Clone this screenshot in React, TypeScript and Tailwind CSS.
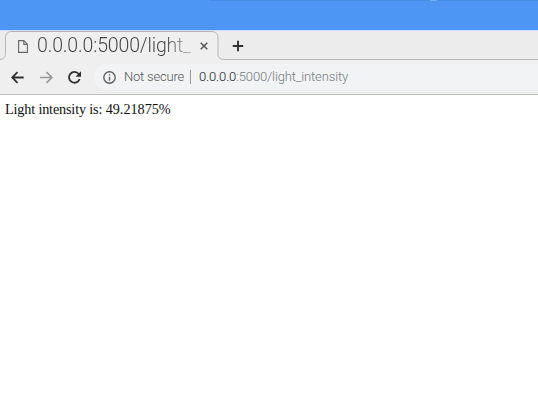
function TabStrip() {
  return (
    <div className="relative h-[31px] bg-[#ececec]">
      <svg className="absolute inset-0" width="538" height="31" viewBox="0 0 538 31" fill="none">
        <path d="M0 0H538" stroke="#c9dff9" strokeWidth="2" />
        <path d="M0 29.500C4 29 5.500 27 5.500 23V8C5.500 3.500 8 1.500 12 1.500H211C216 1.500 218 4 218 8V24C218 28 220.500 29.500 225 29.500H538V31H0Z" fill="#efefef" />
        <path d="M0 29.500C4 29 5.500 27 5.500 23V8C5.500 3.500 8 1.500 12 1.500H211C216 1.500 218 4 218 8V24C218 28 220.500 29.500 225 29.500H538" stroke="#b5b5b5" />
      </svg>
      <div className="relative flex h-full items-center">
        <svg className="ml-[18px] mt-px shrink-0" width="10" height="13" viewBox="0 0 10 13" fill="none" stroke="#666" strokeWidth="1.1">
          <path d="M.6.6H5.800L9.400 4.200V12.400H.6ZM5.800.6V4.400H9.400" />
        </svg>
        <div className="ml-[9px] w-[154px] whitespace-nowrap bg-linear-to-r from-[#444] from-82% to-[#66666660] bg-clip-text text-[19.5px] leading-[29px] font-light tracking-[-0.150px] text-transparent">
          0.0.0.0:5000/light_
        </div>
        <svg className="ml-[9px] shrink-0" width="8" height="8" viewBox="0 0 8 8" stroke="#555" strokeWidth="1.5">
          <path d="M.7.7L7.300 7.300M7.300.7L.7 7.300" />
        </svg>
        <svg className="ml-[24px] shrink-0" width="12" height="12" viewBox="0 0 12 12" stroke="#303030" strokeWidth="1.9">
          <path d="M6 .8V11.200M.8 6H11.200" />
        </svg>
      </div>
    </div>
  );
}

function Toolbar() {
  return (
    <div className="flex h-[34px] items-center border-b border-[#bfc1bd] bg-[#efefef] pb-px">
      <svg className="ml-[11px] shrink-0" width="13" height="13" viewBox="0 0 13 13" fill="none" stroke="#303030" strokeWidth="1.8">
        <path d="M12.700 6.500H1.500M6.500 1.200L1.200 6.500L6.500 11.800" />
      </svg>
      <svg className="ml-4 shrink-0" width="13" height="13" viewBox="0 0 13 13" fill="none" stroke="#999" strokeWidth="1.7">
        <path d="M0 6.500H11.500M6.500 1.200L11.800 6.500L6.500 11.800" />
      </svg>
      <svg className="ml-[15px] shrink-0" width="13" height="13" viewBox="0 0 13 13" fill="none">
        <path d="M10.700 3A5.400 5.400 0 1 0 11.600 8" stroke="#303030" strokeWidth="1.800" />
        <path d="M13 .2V5.700H7.500Z" fill="#303030" />
      </svg>
      <div className="ml-[13px] flex h-[26px] flex-1 items-center rounded-l-full bg-[#f2f3f4] text-[13px] font-light">
        <svg className="ml-[9px] shrink-0" width="13" height="13" viewBox="0 0 13 13" fill="none" stroke="#606060" strokeWidth="1.4">
          <circle cx="6.500" cy="6.500" r="5.700" />
          <path d="M6.500 5.700V9.700M6.500 3.200V4.600" />
        </svg>
        <span className="ml-2 w-[60px] whitespace-nowrap tracking-[-0.200px] text-[#555]">Not secure</span>
        <span className="ml-[6px] h-[14px] w-px bg-[#999]" />
        <span className="ml-2 whitespace-nowrap tracking-[-0.140px] text-[#737b82]">
          <span className="text-[#202124]">0.0.0.0</span>:5000/light_intensity
        </span>
      </div>
    </div>
  );
}

export default function App() {
  return (
    <div className="flex h-[411px] w-[538px] flex-col overflow-hidden bg-white font-['Roboto',sans-serif]">
      <div className="relative h-[30px] shrink-0 bg-[#4d96f3]">
        <div className="ml-[210px] h-px bg-[#478de3]" />
        <div className="absolute left-[430px] top-0 h-px w-[7px] rounded-b-full bg-[#73adf5]" />
      </div>
      <TabStrip />
      <Toolbar />
      <main className="px-[5px] pt-1 font-['Liberation_Serif',serif] text-[14.2px] leading-5 text-[#111]">
        <span className="tracking-[-0.150px]">Light intensity is: </span>
        <span>49.21875%</span>
      </main>
    </div>
  );
}
